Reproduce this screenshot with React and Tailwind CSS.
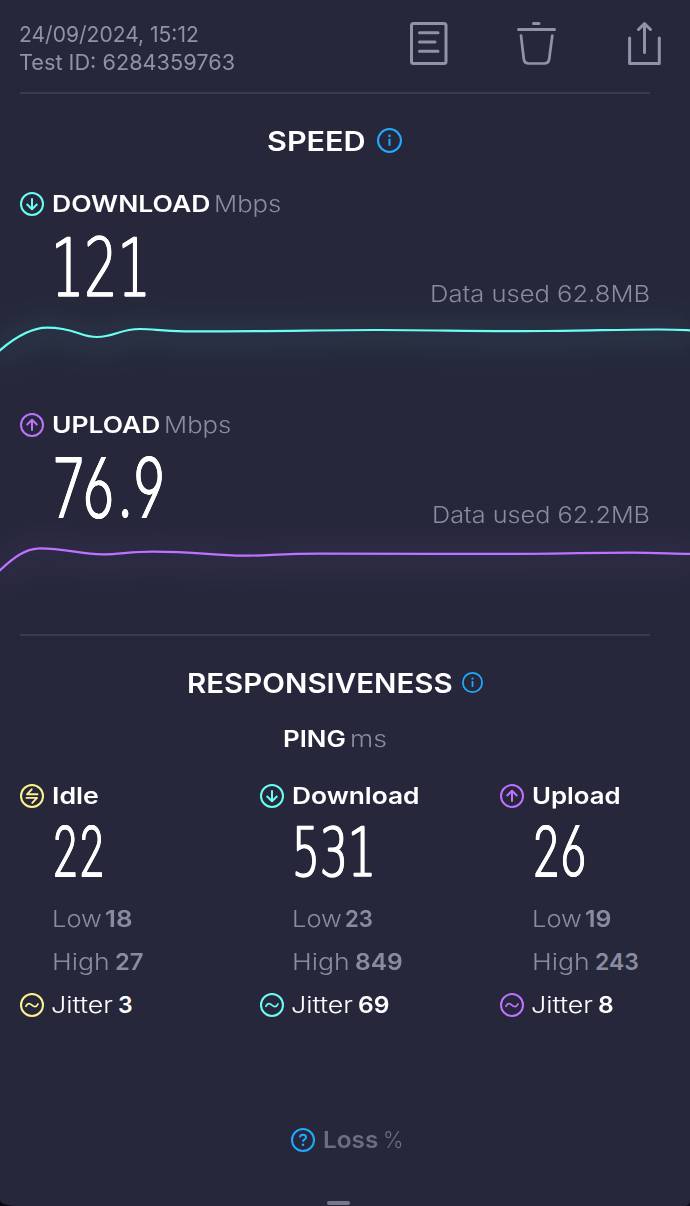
import { useLayoutEffect, useRef, useState } from 'react';
import clsx from 'clsx';

const CYAN = '#6afff3';
const PURPLE = '#bf71ff';
const YELLOW = '#fff38e';
const BLUE = '#20aaff';

// Stretches a run of text to a fixed width
function Fit({ w, className, children }) {
  const ref = useRef(null);
  const [scale, setScale] = useState(1);

  useLayoutEffect(() => {
    setScale(w / ref.current.offsetWidth);
  }, [w, children]);

  return (
    <span className={clsx('block shrink-0', className)} style={{ width: w }}>
      <span
        ref={ref}
        className="inline-block origin-left whitespace-nowrap"
        style={{ transform: `scaleX(${scale})` }}
      >
        {children}
      </span>
    </span>
  );
}

function Ring({ color, size = 24, children }) {
  return (
    <svg className="shrink-0" width={size} height={size} viewBox="0 0 24 24" fill="none"
      stroke={color} strokeWidth="2" strokeLinecap="round" strokeLinejoin="round">
      <circle cx="12" cy="12" r="11" />
      {children}
    </svg>
  );
}

const DownIcon = () => (
  <Ring color={CYAN}><path d="M12 6.3v10.5M6.7 12l5.3 5.2 5.3-5.2" strokeLinecap="butt" /></Ring>
);
const UpIcon = () => (
  <Ring color={PURPLE}><path d="M12 17.8V7M6.7 12l5.3-5.2 5.3 5.2" strokeLinecap="butt" /></Ring>
);
const IdleIcon = () => (
  <Ring color={YELLOW}>
    <path d="M17.5 10.3H7l4.7-5M6.5 13.9H17l-4.7 5" strokeWidth="1.9" />
  </Ring>
);
const JitterIcon = ({ color }) => (
  <Ring color={color}>
    <path d="M6 13.2c.7-1.6 1.7-2.6 3-2.6 2.5 0 3.4 3 6 3 1.3 0 2.3-1 3-2.6" strokeWidth="1.8" />
  </Ring>
);
const InfoIcon = ({ size }) => (
  <Ring color={BLUE} size={size}>
    <path d="M12 10.2v6.8" strokeWidth="2" strokeLinecap="butt" />
    <path d="M12 6.4v2.2" strokeWidth="2.2" strokeLinecap="butt" />
  </Ring>
);

function Toolbar() {
  return (
    <div className="flex pt-[22px] pr-[28px] text-[#9192aa]">
      <svg width="38" height="44" viewBox="0 0 38 44" fill="none" stroke="currentColor" strokeWidth="3" strokeLinecap="round">
        <rect x="1.5" y="1.5" width="34.5" height="40" rx="2" />
        <path d="M9.5 10.7h18.500M9.5 20h15.500M9.5 29.2h18.500" />
      </svg>
      <svg className="ml-[68px]" width="42" height="44" viewBox="0 0 42 44" fill="none" stroke="currentColor" strokeWidth="3" strokeLinecap="round">
        <path d="M17.500 1.5h5.500M2.500 7.500h36" />
        <path d="M5 13.500l2.800 23.500c.4 3 2 4.500 5 4.500h15.400c3 0 4.600-1.500 5-4.500l3.100-23.500" strokeWidth="2.700" />
      </svg>
      <svg className="ml-[69px]" width="35" height="44" viewBox="0 0 35 44" fill="none" stroke="currentColor" strokeWidth="3" strokeLinecap="round" strokeLinejoin="round">
        <path d="M2.600 16v25.500h29.700V16" />
        <path d="M17.500 30.500V2M11.500 7.500l6-5.800 6 5.800" />
      </svg>
    </div>
  );
}

function Chart({ id, d, color, className }) {
  return (
    <svg className={clsx('block w-full shrink-0 overflow-visible', className)} fill="none">
      <defs>
        <filter id={id} filterUnits="userSpaceOnUse" x="-80" y="-60" width="850" height="200">
          <feGaussianBlur stdDeviation="12" />
        </filter>
      </defs>
      <path d={d} transform="translate(0 4)" stroke={color} strokeWidth="28" strokeOpacity="0.06" filter={`url(#${id})`} />
      <path d={d} stroke={color} strokeWidth="2.2" />
    </svg>
  );
}

// Footed numeral one
const footed = "font-['DejaVu_Sans'] font-extralight [-webkit-text-stroke:1.3px_white] [text-shadow:1.3px_0_white,-1.3px_0_white]";
// Straight-stemmed six and nine
const straight = "font-light [font-feature-settings:'cv03','cv04'] [text-shadow:0.3px_0_white,-0.3px_0_white]";

function Speed({ icon, name, nameW, unitW, value, valueW, valueClass, used, usedW }) {
  return (
    <>
      <div className="flex h-8 shrink-0 items-center pl-5">
        {icon}
        <Fit w={nameW} className="ml-2 font-semibold">{name}</Fit>
        <Fit w={unitW} className="ml-1 font-light text-[#8a8ba2]">Mbps</Fit>
      </div>
      <div className="flex h-[94px] shrink-0 justify-between pr-10 pl-[51px]">
        <Fit w={valueW} className={valueClass}>{value}</Fit>
        <Fit w={usedW} className="pt-[58px] leading-8 font-light text-[#8a8ba2]">Data used {used}</Fit>
      </div>
    </>
  );
}

function Ping({ icon, color, name, nameW, value, valueW, valueClass, low, lowW, high, highW, jitter, jitterW }) {
  return (
    <div>
      <div className="flex h-8 items-center">
        {icon}
        <Fit w={nameW} className="ml-2 font-semibold">{name}</Fit>
      </div>
      <div className="h-[85px] pl-8">
        <Fit w={valueW} className={valueClass}>{value}</Fit>
      </div>
      <div className="flex h-[43px] items-center pl-8 text-[#8a8ba2]">
        <Fit w={50} className="font-light">Low</Fit>
        <Fit w={lowW} className="ml-[3px] font-semibold">{low}</Fit>
      </div>
      <div className="flex h-[43px] items-center pl-8 text-[#8a8ba2]">
        <Fit w={58} className="font-light">High</Fit>
        <Fit w={highW} className="ml-[5px] font-semibold">{high}</Fit>
      </div>
      <div className="flex h-[43px] items-center">
        <JitterIcon color={color} />
        <Fit w={62} className="ml-[7px] font-light">Jitter</Fit>
        <Fit w={jitterW} className="ml-[5px] font-semibold">{jitter}</Fit>
      </div>
    </div>
  );
}

export default function App() {
  return (
    <div className="h-[1206px] w-[690px] overflow-hidden bg-[#0a0a17]">
      <div className="flex h-full flex-col rounded-br-[5px] rounded-bl-[16px_6px] bg-[#26273b] font-['Inter',sans-serif] text-[23px] leading-8 text-white">
        <header className="flex h-[92px] shrink-0 justify-between">
          <div className="pt-5 pl-[19px] text-[21.5px] leading-7 text-[#9192aa]">
            <Fit w={180}>24/09/2024, 15:12</Fit>
            <Fit w={216}>Test ID: 6284359763</Fit>
          </div>
          <Toolbar />
        </header>
        <div className="mx-5 h-0.5 w-[630px] shrink-0 bg-[#3a3b50]" />

        <div className="flex h-[94px] shrink-0 items-center pl-[266.5px] text-[27px]">
          <Fit w={98.5} className="pt-0.5 font-semibold">SPEED</Fit>
          <div className="mb-0.5 ml-[12px]"><InfoIcon size={25} /></div>
        </div>

        <Speed icon={<DownIcon />} name="DOWNLOAD" nameW={158} unitW={67}
          value="121" valueW={100} valueClass={clsx(footed, 'text-[81px] leading-[97px]')} used="62.8MB" usedW={220} />
        <Chart className="h-[95px]" id="download-glow" color={CYAN}
          d="M-2 38C14 24 30 13.700 47 13.700C75 13.700 80 23 97 23C114 23 120 15 140 15C155 15 160 17.200 185 17.300C270 17.500 330 15.800 380 16C440 16.200 490 17.500 545 17C590 16.600 630 15.300 660 15.500C675 15.600 682 16 692 16.400" />

        <Speed icon={<UpIcon />} name="UPLOAD" nameW={108} unitW={67}
          value="76.9" valueW={115} valueClass={clsx(straight, 'pl-[2px] text-[84px] leading-[94px] tracking-[4px]')} used="62.2MB" usedW={218.5} />
        <Chart className="h-[99px]" id="upload-glow" color={PURPLE}
          d="M-2 37C14 22 26 13.300 40 13.300C65 13.300 80 19.300 103 19.300C120 19.300 130 16.600 153 16.600C195 16.600 215 20.700 243 20.700C268 20.700 280 18.700 320 18.700C390 18.600 420 18.700 460 18.900C530 19.400 580 17.700 632 17.700C655 17.700 672 18.600 692 18.800" />

        <div className="mx-5 h-0.5 w-[630px] shrink-0 bg-[#3a3b50]" />
        <div className="flex h-[94px] shrink-0 items-center pl-[187px] text-[27px]">
          <Fit w={265.5} className="pt-0.5 font-semibold">RESPONSIVENESS</Fit>
          <div className="mb-0.5 ml-[9.5px]"><InfoIcon size={21} /></div>
        </div>
        <div className="flex h-[18px] shrink-0 items-center pl-[283px]">
          <Fit w={63} className="font-semibold">PING</Fit>
          <Fit w={37} className="ml-1 font-light text-[#8a8ba2]">ms</Fit>
        </div>

        <div className="mt-8 grid shrink-0 grid-cols-[240px_240px_190px] pl-5">
          <Ping icon={<IdleIcon />} color={YELLOW} name="Idle" nameW={46.5}
            value="22" valueW={53} valueClass={clsx(straight, 'text-[71px] leading-[78px]')}
            low="18" lowW={27} high="27" highW={29} jitter="3" jitterW={15} />
          <Ping icon={<DownIcon />} color={CYAN} name="Download" nameW={127}
            value="531" valueW={84} valueClass={clsx(footed, 'text-[68px] leading-[81px]')}
            low="23" lowW={28} high="849" highW={48} jitter="69" jitterW={31} />
          <Ping icon={<UpIcon />} color={PURPLE} name="Upload" nameW={88.5}
            value="26" valueW={54.5} valueClass={clsx(straight, 'text-[71px] leading-[78px]')}
            low="19" lowW={26} high="243" highW={44} jitter="8" jitterW={16} />
        </div>

        <div className="mt-[98px] flex h-8 shrink-0 items-center pl-[291px] text-[#6c6d82]">
          <Ring color={BLUE}>
            <path d="M8.9 9.3c.2-1.7 1.4-2.600 3.100-2.600 1.800 0 3.100 1 3.100 2.500 0 2.200-3.100 2.200-3.100 4.600" strokeLinecap="butt" />
            <path d="M12 15.700v2.200" strokeWidth="2.300" strokeLinecap="butt" />
          </Ring>
          <Fit w={55} className="ml-2 font-semibold">Loss</Fit>
          <Fit w={21} className="ml-[5px] font-light">%</Fit>
        </div>
        <div className="mt-[45px] ml-[327px] h-1 w-[23px] shrink-0 rounded-full bg-[#77788e]" />
      </div>
    </div>
  );
}
